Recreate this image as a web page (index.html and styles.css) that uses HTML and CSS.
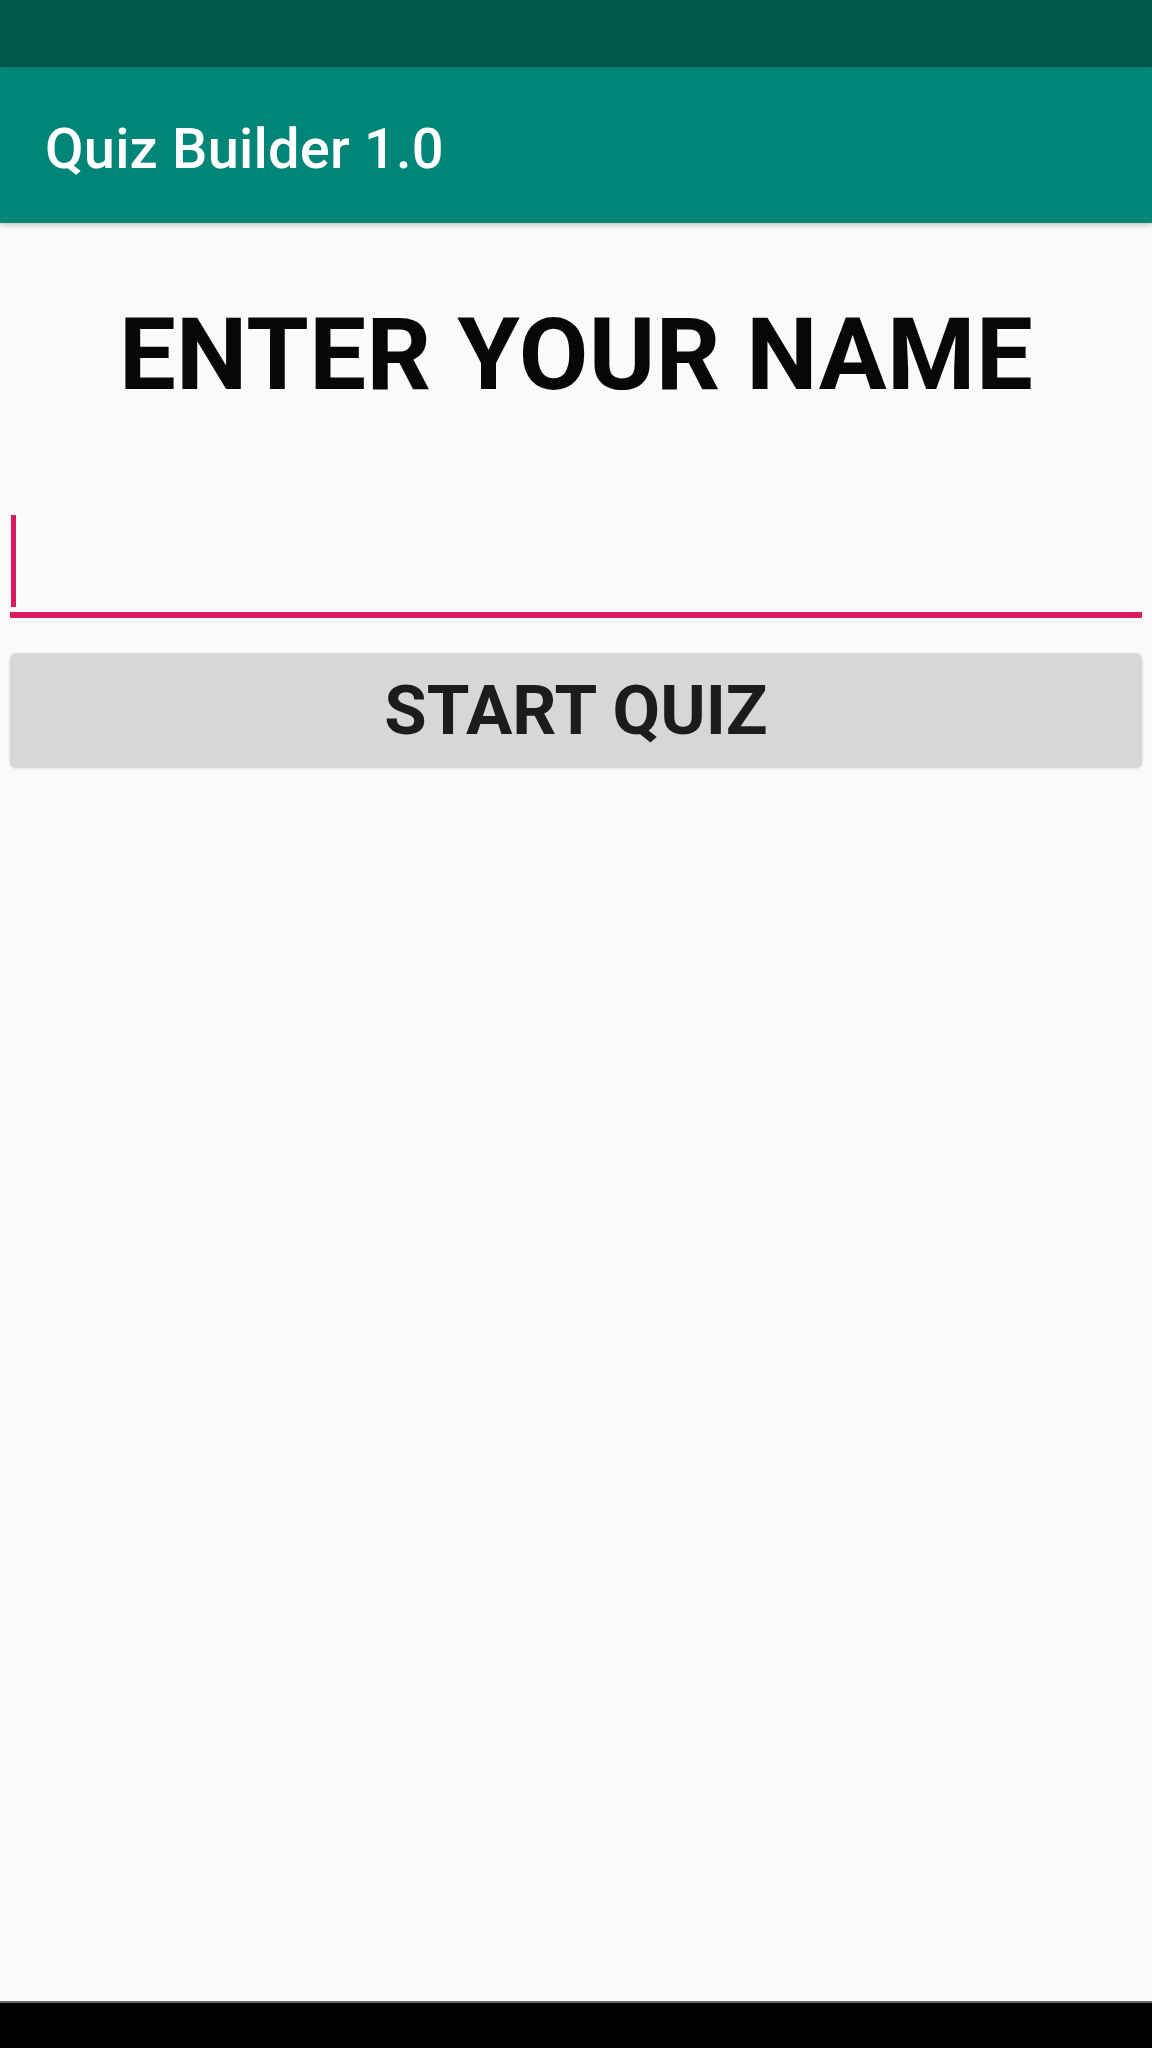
FILE: index.html
```html
<!DOCTYPE html>
<html lang="en">
<head>
<meta charset="utf-8">
<title>Quiz Builder 1.0</title>
<link rel="stylesheet" href="styles.css">
</head>
<body>
<div class="screen">
  <div class="status-bar"></div>
  <header class="app-bar">
    <h1 class="app-title">Quiz Builder 1.0</h1>
  </header>
  <main class="content">
    <h2 class="prompt">ENTER YOUR NAME</h2>
    <div class="edit-field"><span class="cursor"></span></div>
    <button class="start-btn" type="button">START QUIZ</button>
  </main>
  <div class="nav-bar"></div>
</div>
</body>
</html>
```

FILE: styles.css
```css
html, body {
  margin: 0;
  padding: 0;
  background: #fafafa;
}

.screen {
  display: flex;
  flex-direction: column;
  height: 2048px;
  font-family: Roboto, "Noto Sans", sans-serif;
}

.status-bar {
  height: 67px;
  background: #00574b;
  flex: none;
}

.app-bar {
  height: 156px;
  background: #008577;
  display: flex;
  align-items: center;
  padding-left: 45px;
  box-shadow: 0 2px 5px rgba(0, 0, 0, 0.22);
  position: relative;
  z-index: 1;
  flex: none;
}

.app-title {
  margin: 0;
  color: #ffffff;
  font-size: 56px;
  font-weight: 500;
  line-height: 66px;
  padding-top: 8px;
  letter-spacing: 0.2px;
}

.content {
  flex: 1;
  display: flex;
  flex-direction: column;
  padding: 0 10px;
}

.prompt {
  margin: 73px 0 0;
  text-align: center;
  font-size: 101px;
  font-weight: 700;
  line-height: 118px;
  letter-spacing: 0.4px;
  color: #070707;
}

.edit-field {
  margin-top: 86px;
  height: 97px;
  padding-top: 15px;
  border-bottom: 6px solid #d81b60;
  box-sizing: content-box;
}

.cursor {
  display: block;
  width: 5px;
  height: 92px;
  margin-left: 1px;
  background: #d81b60;
}

.start-btn {
  margin-top: 35px;
  height: 113px;
  border: none;
  border-radius: 6px;
  background: #d6d7d7;
  box-shadow: 0 2px 3px rgba(0, 0, 0, 0.2);
  font-family: Roboto, "Noto Sans", sans-serif;
  font-size: 69px;
  font-weight: 700;
  color: #1c1c1c;
  padding: 0;
  padding-top: 2px;
}

.nav-bar {
  height: 45px;
  background: #000000;
  border-top: 2px solid #6a6a6a;
  flex: none;
}
```
